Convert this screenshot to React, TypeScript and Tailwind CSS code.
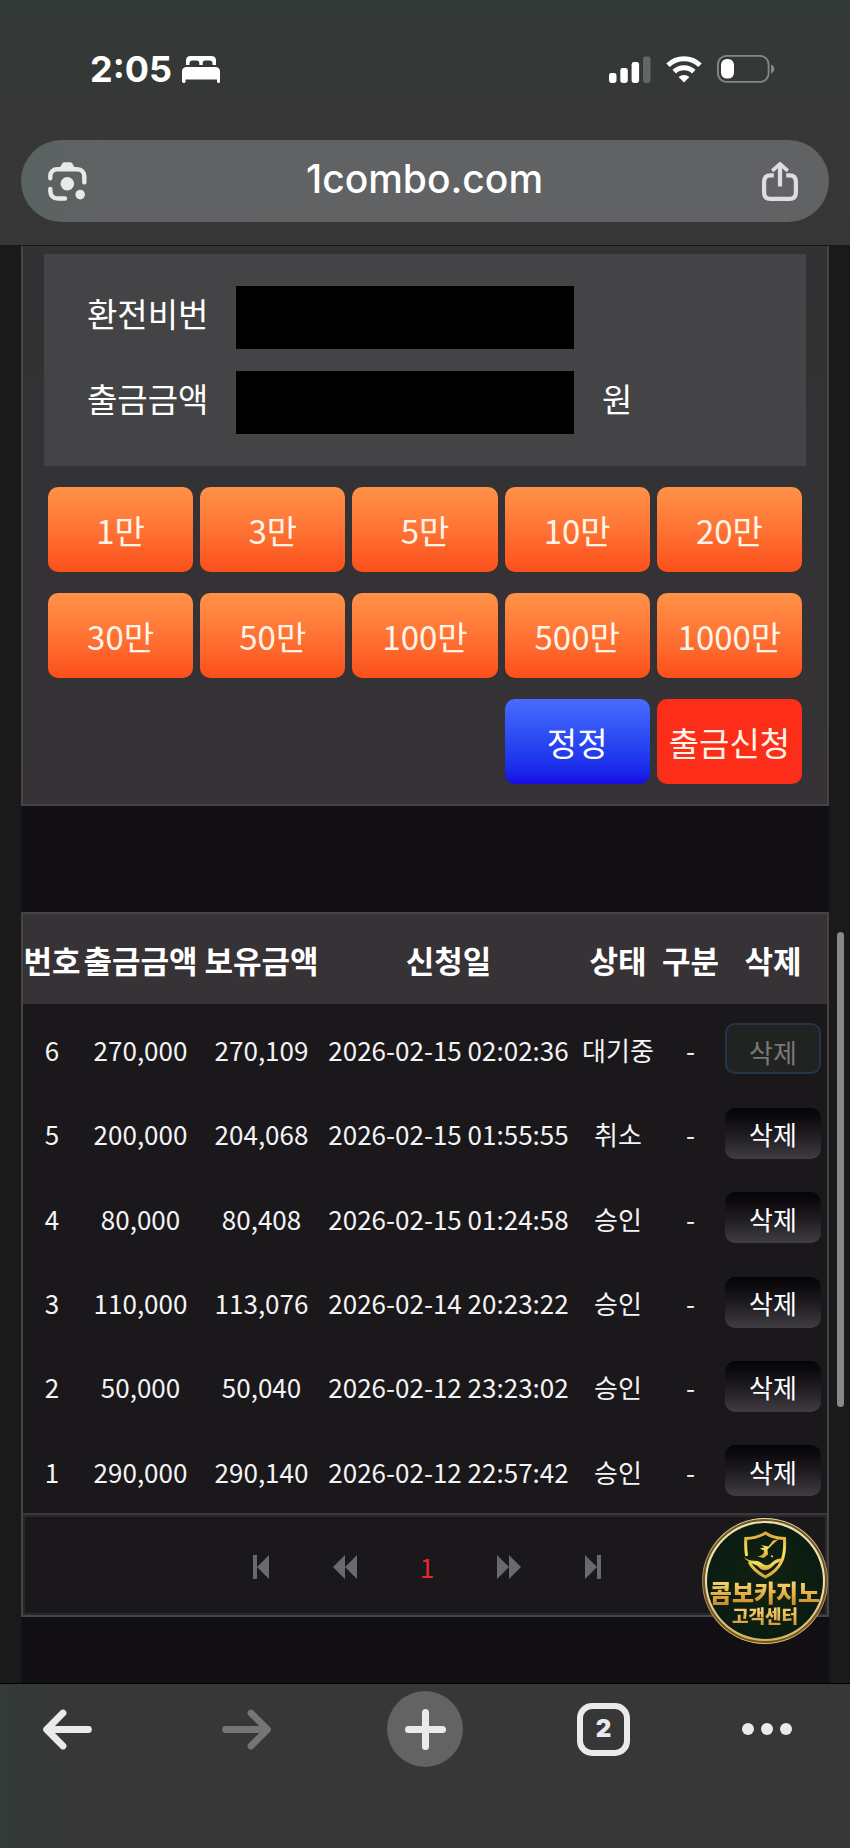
import React from "react";

type Row = {
  no: number;
  amount: string;
  balance: string;
  date: string;
  status: string;
  pending?: boolean;
};

const rows: Row[] = [
  { no: 6, amount: "270,000", balance: "270,109", date: "2026-02-15 02:02:36", status: "대기중", pending: true },
  { no: 5, amount: "200,000", balance: "204,068", date: "2026-02-15 01:55:55", status: "취소" },
  { no: 4, amount: "80,000", balance: "80,408", date: "2026-02-15 01:24:58", status: "승인" },
  { no: 3, amount: "110,000", balance: "113,076", date: "2026-02-14 20:23:22", status: "승인" },
  { no: 2, amount: "50,000", balance: "50,040", date: "2026-02-12 23:23:02", status: "승인" },
  { no: 1, amount: "290,000", balance: "290,140", date: "2026-02-12 22:57:42", status: "승인" },
];

const amounts = ["1만", "3만", "5만", "10만", "20만", "30만", "50만", "100만", "500만", "1000만"];

const headings = ["번호", "출금금액", "보유금액", "신청일", "상태", "구분", "삭제"];

function BedIcon() {
  return (
    <svg width="38" height="27" viewBox="0 0 38 27" fill="#fff" aria-hidden="true">
      <path d="M4 9V4.500C4 1.600 5.600 0 8.500 0H29.500C32.400 0 34 1.600 34 4.500V9H30.500V7.500C30.500 5.400 29.600 4.500 27.500 4.500H23.500C21.600 4.500 20.700 5.300 20.700 7.200V9H17.300V7.200C17.300 5.300 16.400 4.500 14.500 4.500H10.500C8.400 4.500 7.500 5.400 7.500 7.500V9Z" />
      <path d="M0 15.500C0 12.600 1.800 11 4.600 11H33.400C36.200 11 38 12.600 38 15.500V25.500C38 26.400 37.500 27 36.500 27C35.500 27 35 26.400 35 25.500V23.600H3.500V25.500C3.500 26.400 3 27 2 27C.8 27 0 26.400 0 25.500Z" />
    </svg>
  );
}

function SignalIcon() {
  return (
    <svg width="42" height="27" viewBox="0 0 42 27" fill="#fff" aria-hidden="true">
      <rect x="0" y="17" width="7.500" height="10" rx="2.400" />
      <rect x="11.300" y="12" width="7.500" height="15" rx="2.400" />
      <rect x="22.600" y="6" width="7.500" height="21" rx="2.400" />
      <rect x="34" y="0.500" width="7.500" height="26.500" rx="2.400" fill="#646665" />
    </svg>
  );
}

function WifiIcon() {
  return (
    <svg width="36" height="27" viewBox="0 0 36 27" fill="none" stroke="#fff" strokeWidth="5" aria-hidden="true">
      <path d="M2 9.300C10.800.6 25.200.6 34 9.300" />
      <path d="M8.200 15.600C13.600 10.300 22.400 10.300 27.800 15.600" />
      <path d="M12.600 21C15.600 18.200 20.400 18.200 23.400 21L18 26.500Z" fill="#fff" stroke="none" />
    </svg>
  );
}

function BatteryIcon() {
  return (
    <svg width="58" height="28" viewBox="0 0 58 28" fill="none" aria-hidden="true">
      <rect x="0.900" y="0.900" width="50.700" height="26" rx="8.500" stroke="#858887" strokeWidth="1.800" />
      <rect x="4" y="4" width="13" height="19.600" rx="5.800" fill="#fff" />
      <path d="M54 9.500C56 10.300 57.300 12 57.300 14C57.300 16 56 17.700 54 18.500Z" fill="#858887" />
    </svg>
  );
}

function LensIcon() {
  return (
    <svg width="39" height="39" viewBox="0 0 39 39" fill="none" stroke="#e8eaea" strokeWidth="4.400" strokeLinecap="round" aria-hidden="true">
      <path d="M2.300 16.200V14.500C2.300 9.800 5.200 7.300 9.500 7.300H29C33.600 7.300 36.300 10 36.300 14.500V20.400" />
      <path d="M2.300 27V29C2.300 33.700 5 36.500 9.800 36.500H17" />
      <path d="M10.500 8L13.800 2.200C14.600.7 15.500.2 17 .2H21.600C23.100.2 24 .7 24.800 2.200L28 8Z" fill="#e8eaea" stroke="none" />
      <circle cx="19.300" cy="21.700" r="6.800" fill="#e8eaea" stroke="none" />
      <circle cx="32.200" cy="32.600" r="4.800" fill="#e8eaea" stroke="none" />
    </svg>
  );
}

function ShareIcon() {
  return (
    <svg width="36" height="39" viewBox="0 0 36 39" fill="none" stroke="#dedee0" strokeWidth="4.200" strokeLinejoin="round" aria-hidden="true">
      <path d="M11.800 13.400H8.500C4.300 13.400 2.100 15.600 2.100 19.800V30.400C2.100 34.600 4.300 36.900 8.500 36.900H27.500C31.700 36.900 33.900 34.600 33.900 30.400V19.800C33.900 15.600 31.700 13.400 27.500 13.400H24.200" />
      <path d="M18 24.500V3" strokeLinecap="butt" />
      <path d="M10.200 8.900L18 1.800L25.800 8.900" strokeWidth="3.600" />
    </svg>
  );
}

function BackIcon({ className }: { className: string }) {
  return (
    <svg className={className} width="49" height="41" viewBox="0 0 49 41" fill="none" stroke="currentColor" strokeWidth="6.800" strokeLinecap="round" strokeLinejoin="round" aria-hidden="true">
      <path d="M45.400 20.500H4.500" />
      <path d="M20 4L3.600 20.500L20 37" />
    </svg>
  );
}

function BadgeEmblem() {
  return (
    <svg width="44" height="48" viewBox="0 0 44 48" fill="none" aria-hidden="true">
      <defs>
        <linearGradient id="emblem" x1="0" y1="0" x2="0" y2="1">
          <stop offset="0" stopColor="#e2a63a" />
          <stop offset="0.450" stopColor="#f4e45a" />
          <stop offset="1" stopColor="#d9a53c" />
        </linearGradient>
      </defs>
      <path d="M3.600 25C2.600 19 2.500 13 2.800 7.500C10 7.200 17 5.200 22.500 2C27 5.200 34 7.200 41.500 7.500C42.400 24 40 37 22.500 46C15 42 9 36.500 6.200 31" stroke="url(#emblem)" strokeWidth="3" />
      <path d="M1 26C6 31 11 29 16 30.500C20 33 24 37 29.500 31C32.500 28 36.500 27 39.500 27.500C37 31.500 34 31 31 34C26 40 20 41 15.500 36C12.500 32.500 5 32.500 1 26Z" fill="url(#emblem)" />
      <path d="M18 14L25.500 15.500L30 9.500L36 8L30 13L24.500 18.500L25 23.500L20.500 27L14.500 25.500C19 25 21.500 22.500 21 19.500L16.800 17.500L21.500 16.500Z" fill="url(#emblem)" />
      <path d="M28 24.500L30 26" stroke="#f4e45a" strokeWidth="1.500" />
    </svg>
  );
}

function DeleteButton({ pending }: { pending?: boolean }) {
  return pending ? (
    <button
      type="button"
      disabled
      className="mx-auto block h-[51px] w-24 rounded-[10px] border-2 border-[#26344a] bg-[#202321] pt-1.5 text-[26px] leading-[40px] text-[#777978]"
    >
      삭제
    </button>
  ) : (
    <button
      type="button"
      className="mx-auto block h-[51px] w-24 rounded-[10px] bg-linear-to-b from-[#050406] via-[#1d1b1f] to-[#403e43] pt-0.5 text-[26px] leading-[40px] text-white"
    >
      삭제
    </button>
  );
}

export default function App() {
  return (
    <div className="relative flex min-h-screen flex-col bg-[#1b1a1b] font-['Noto_Sans_CJK_KR',sans-serif] text-white">
      <header className="border-b border-[#161717] bg-linear-to-b from-[#323936] via-[#363736] to-[#363638] px-[21px] pb-[23px] font-['Inter',sans-serif]">
        <div className="flex h-[140px] items-center justify-between pr-[54px] pb-0.5 pl-[69px]">
          <div className="flex items-center gap-2.5">
            <span className="text-[36px] leading-[40px] font-bold">2:05</span>
            <BedIcon />
          </div>
          <div className="flex items-center gap-[15px]">
            <SignalIcon />
            <WifiIcon />
            <BatteryIcon />
          </div>
        </div>
        <div className="flex h-[82px] items-center justify-between rounded-full bg-linear-to-r from-[#596361] via-[#616264] via-10% to-[#616264] pr-[31px] pl-[27px]">
          <button type="button" aria-label="렌즈">
            <LensIcon />
          </button>
          <button type="button" className="pb-1 text-[39px] leading-[48px] font-medium">
            1combo.com
          </button>
          <button type="button" aria-label="공유">
            <ShareIcon />
          </button>
        </div>
      </header>

      <main className="mx-[21px] flex-1 bg-[#110f13] pb-[66px]">
        <form className="border-x-2 border-b-2 border-[#444346] bg-linear-to-b from-[#313233] to-[#363236] px-[21px] pt-2 pb-5" onSubmit={(e) => e.preventDefault()}>
          <div className="flex flex-col gap-[22px] bg-[#444446] px-[43px] py-8 text-[33px] leading-[48px]">
            <div className="flex h-[63px] items-center">
              <label htmlFor="pin" className="w-[149px] pb-2.5">환전비번</label>
              <input id="pin" type="password" className="h-full w-[338px] bg-black px-3 outline-none" />
            </div>
            <div className="flex h-[63px] items-center">
              <label htmlFor="amount" className="w-[149px] pb-2.5">출금금액</label>
              <input id="amount" type="text" className="h-full w-[338px] bg-black px-3 outline-none" />
              <span className="pb-2.5 pl-7">원</span>
            </div>
          </div>
          <div className="mt-[21px] grid grid-cols-5 gap-x-[7px] gap-y-[21px] px-1 text-[33px] leading-[48px] text-[#fff4e8]">
            {amounts.map((a) => (
              <button key={a} type="button" className="h-[85px] rounded-[10px] bg-linear-to-b from-[#ff9248] to-[#fc4e1b]">
                {a}
              </button>
            ))}
            <button type="reset" className="col-start-4 h-[85px] rounded-[10px] bg-linear-to-b from-[#486bff] to-[#170ae4] text-white">
              정정
            </button>
            <button type="submit" className="h-[85px] rounded-[10px] bg-[#fd2e19] whitespace-nowrap">
              출금신청
            </button>
          </div>
        </form>

        <section className="mt-[106px] border-2 border-[#444346] bg-[#1a181b]">
          <table className="h-[599px] w-full table-fixed border-collapse text-center whitespace-nowrap">
            <colgroup>
              <col className="w-[58px]" />
              <col className="w-[119px]" />
              <col className="w-[123px]" />
              <col />
              <col className="w-[88px]" />
              <col className="w-[57px]" />
              <col className="w-[108px]" />
            </colgroup>
            <thead>
              <tr className="h-[91px] border-b-2 border-[#19171a] bg-[#363236] text-[31px] leading-[40px]">
                {headings.map((h) => (
                  <th key={h} scope="col" className="p-0 pt-0.5 font-bold">{h}</th>
                ))}
              </tr>
            </thead>
            <tbody className="text-[26px] leading-[40px] text-[#f4f3f5]">
              {rows.map((r) => (
                <tr key={r.no}>
                  <td className="p-0 pt-0.5">{r.no}</td>
                  <td className="p-0 pt-0.5">{r.amount}</td>
                  <td className="p-0 pt-0.5">{r.balance}</td>
                  <td className="p-0 pt-0.5">{r.date}</td>
                  <td className="p-0 pt-0.5">{r.status}</td>
                  <td className="p-0 pt-0.5">-</td>
                  <td className="p-0"><DeleteButton pending={r.pending} /></td>
                </tr>
              ))}
            </tbody>
          </table>
          <div className="border-t-2 border-[#3a383b]">
            <nav aria-label="페이지" className="flex h-[100px] items-center justify-center border-2 border-[#29272a] pt-1 pl-1 text-[#6a696c]">
              <a href="#first" aria-label="처음" className="flex w-[84px] justify-center">
                <svg width="16" height="24" viewBox="0 0 16 24" fill="currentColor"><path d="M0 0H4V24H0ZM16 0V24L4 12Z" /></svg>
              </a>
              <a href="#prev" aria-label="이전" className="flex w-[84px] justify-center">
                <svg width="24" height="24" viewBox="0 0 24 24" fill="currentColor"><path d="M12 0V24L0 12ZM24 0V24L12 12Z" /></svg>
              </a>
              <a href="#1" aria-current="page" className="w-20 text-center text-[26px] leading-[40px] text-[#e62a2a]">1</a>
              <a href="#next" aria-label="다음" className="flex w-[84px] justify-center">
                <svg width="24" height="24" viewBox="0 0 24 24" fill="currentColor"><path d="M0 0V24L12 12ZM12 0V24L24 12Z" /></svg>
              </a>
              <a href="#last" aria-label="마지막" className="flex w-[84px] justify-center">
                <svg width="16" height="24" viewBox="0 0 16 24" fill="currentColor"><path d="M12 0H16V24H12ZM0 0V24L12 12Z" /></svg>
              </a>
            </nav>
          </div>
        </section>
      </main>

      <footer className="grid h-[165px] grid-cols-[134fr_224fr_134fr_223fr_104fr] items-start justify-items-center border-t border-black bg-linear-to-r from-[#333a38] via-[#373737] via-10% to-[#373738] pt-[7px] pr-[31px]">
        <button type="button" aria-label="뒤로" className="flex h-[76px] items-center">
          <BackIcon className="text-[#eaeaec]" />
        </button>
        <button type="button" aria-label="앞으로" className="flex h-[76px] items-center">
          <BackIcon className="rotate-180 text-[#757577]" />
        </button>
        <button type="button" aria-label="새 탭" className="flex size-[76px] items-center justify-center rounded-full bg-[#636364]">
          <svg width="41" height="41" viewBox="0 0 41 41" stroke="#eaeaec" strokeWidth="7" strokeLinecap="round" aria-hidden="true">
            <path d="M20.500 3.500V37.500M3.500 20.500H37.500" />
          </svg>
        </button>
        <button type="button" className="flex h-[76px] items-center" aria-label="탭 2개">
          <span className="flex size-[53px] items-center justify-center rounded-[15px] border-[6px] border-[#eaeaec] font-['Inter',sans-serif] text-2xl font-black text-[#eaeaec]">
            2
          </span>
        </button>
        <button type="button" aria-label="메뉴" className="flex h-[76px] items-center gap-[7px]">
          <span className="size-3 rounded-full bg-[#eaeaec]" />
          <span className="size-3 rounded-full bg-[#eaeaec]" />
          <span className="size-3 rounded-full bg-[#eaeaec]" />
        </button>
      </footer>

      <div className="absolute top-[932px] right-1.5 h-[475px] w-[7px] rounded-full bg-[#8a878b]" />

      <button
        type="button"
        className="absolute right-[22px] bottom-[204px] size-[126px] rounded-full bg-linear-to-b from-[#f0dfa0] via-[#a8874c] to-[#e3bb62] p-px"
      >
        <span className="flex size-full flex-col items-center rounded-full border-2 border-[#6b5428] bg-linear-to-b from-[#efe2ad] via-[#f1e0b0] to-[#d8b35a] p-0.5">
          <span className="flex size-full flex-col items-center rounded-full bg-radial from-[#12210f] to-[#071a14] pt-2">
            <BadgeEmblem />
            <span className="bg-linear-to-b from-[#f7dc7c] via-[#e9b646] to-[#c98b2a] bg-clip-text text-[24px] leading-[26px] font-black whitespace-nowrap text-transparent">
              콤보카지노
            </span>
            <span className="bg-linear-to-b from-[#f7dc7c] to-[#d59a34] bg-clip-text text-[18px] leading-[20px] font-black whitespace-nowrap text-transparent">
              고객센터
            </span>
          </span>
        </span>
      </button>
    </div>
  );
}
